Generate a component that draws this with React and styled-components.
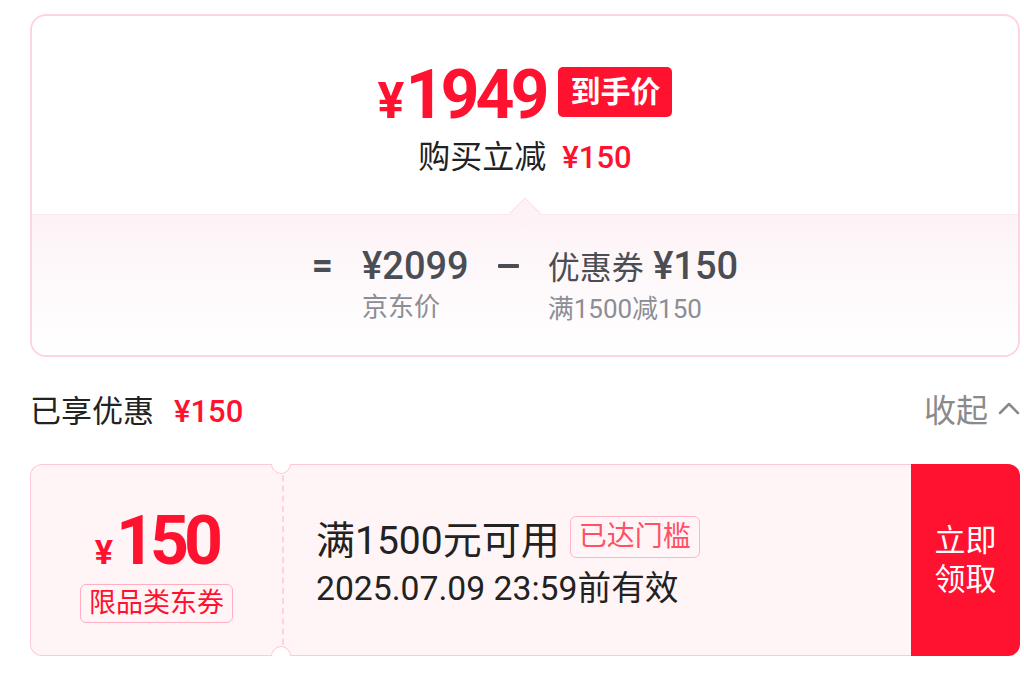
import React from 'react';
import styled, { createGlobalStyle } from 'styled-components';

const RED = '#ff1130';

const GlobalStyle = createGlobalStyle`
  body {
    margin: 0;
    background: #fff;
    font-family: Roboto, "Noto Sans CJK SC", sans-serif;
  }
`;

const Page = styled.div`
  width: 1024px;
  box-sizing: border-box;
  padding: 14px 4px 0 30px;
`;

const SummaryCard = styled.div`
  height: 343px;
  box-sizing: border-box;
  border: 2.5px solid #ffd4e0;
  border-radius: 16px;
  overflow: hidden;
  display: flex;
  flex-direction: column;
`;

const Upper = styled.div`
  height: 198px;
  box-sizing: border-box;
  padding-top: 46px;
  display: flex;
  flex-direction: column;
  align-items: center;
`;

const PriceRow = styled.div`
  height: 60px;
  display: flex;
  align-items: center;
  gap: 13px;
`;

const BigPrice = styled.span`
  margin-top: 12px;
  color: ${RED};
  font-family: Roboto, sans-serif;
  font-weight: 700;
  font-size: 68px;
  line-height: 60px;
  letter-spacing: -4px;
`;

const Yen = styled.span`
  font-size: ${(p) => p.size}px;
  letter-spacing: 0;
  margin-right: ${(p) => p.gap || 0}px;
`;

const PriceTag = styled.span`
  height: 50px;
  padding: 0 12px;
  border-radius: 5px;
  background: ${RED};
  color: #fff;
  font-weight: 700;
  font-size: 30px;
  line-height: 50px;
`;

const Subtitle = styled.div`
  margin-top: 15px;
  line-height: 40px;
  font-size: 32px;
  color: #222;
`;

const RedValue = styled.span`
  color: ${RED};
  font-weight: 500;
  font-size: ${(p) => p.size || 31}px;
  margin-left: ${(p) => p.gap || 0}px;
`;

const Lower = styled.div`
  flex: 1;
  position: relative;
  border-top: 1px solid #fde6ec;
  background: linear-gradient(#fdf3f6, #ffffff);
  padding-top: 29px;
  display: flex;
  justify-content: center;
  align-items: flex-start;
  gap: 29px;

  &::before {
    content: '';
    position: absolute;
    left: 50%;
    top: -13px;
    width: 22px;
    height: 22px;
    margin-left: -11px;
    box-sizing: border-box;
    background: #fdf3f6;
    border-top: 1px solid #fde0e8;
    border-left: 1px solid #fde0e8;
    transform: rotate(45deg);
  }
`;

const Operator = styled.span`
  color: #4b4d55;
  font-weight: 700;
  font-size: 37px;
  line-height: 44px;
`;

const MinusSign = styled.span`
  width: 21px;
  height: 4px;
  margin-top: 20px;
  border-radius: 1px;
  background: #4b4d55;
`;

const Term = styled.div`
  display: flex;
  flex-direction: column;
`;

const TermAmount = styled.div`
  color: #4b4d55;
  font-weight: 500;
  font-size: 38px;
  line-height: 44px;
  white-space: nowrap;
`;

const TermLabel = styled.span`
  font-weight: 400;
  font-size: 32px;
`;

const TermCaption = styled.div`
  margin-top: 2px;
  color: #8c8e96;
  font-size: 26px;
  line-height: 34px;
  white-space: nowrap;
`;

const Header = styled.div`
  margin-top: 21px;
  height: 60px;
  display: flex;
  align-items: center;
  justify-content: space-between;
`;

const HeaderTitle = styled.div`
  color: #222;
  font-size: 31px;
`;

const Collapse = styled.div`
  display: flex;
  align-items: center;
  gap: 10px;
  color: #8a8a8a;
  font-size: 32px;
`;

const Coupon = styled.div`
  margin-top: 26px;
  height: 192px;
  display: flex;
`;

const Ticket = styled.div`
  flex: 1;
  display: flex;
  background: #fff5f7;
  border: 1px solid #ffcad7;
  border-right: none;
  border-radius: 12px 0 0 12px;
`;

const Notch = styled.span`
  position: absolute;
  right: -9px;
  width: 20px;
  height: 20px;
  box-sizing: border-box;
  border-radius: 50%;
  background: #fff;
  border: 1px solid transparent;
  transform: rotate(-45deg);
  ${(p) =>
    p.bottom
      ? `bottom: -11px; border-top-color: #ffcad7; border-right-color: #ffcad7;`
      : `top: -11px; border-bottom-color: #ffcad7; border-left-color: #ffcad7;`}
`;

const CouponValue = styled.div`
  position: relative;
  width: 251px;
  border-right: 2px dashed #ffd3de;
  padding-top: 11px;
  box-sizing: content-box;
  display: flex;
  flex-direction: column;
  align-items: center;
  justify-content: center;
`;

const CouponAmount = styled.div`
  color: ${RED};
  font-family: Roboto, sans-serif;
  font-weight: 700;
  font-size: 68px;
  line-height: 64px;
  letter-spacing: -5px;
`;

const OutlineTag = styled.span`
  height: ${(p) => p.h}px;
  box-sizing: border-box;
  padding: 0 ${(p) => p.pad}px;
  border: 1px solid ${(p) => p.border};
  border-radius: 6px;
  color: ${(p) => p.color};
  font-size: ${(p) => p.size}px;
  line-height: ${(p) => p.h - 2}px;
  white-space: nowrap;
`;

const CouponInfo = styled.div`
  flex: 1;
  padding: 4px 0 0 32px;
  display: flex;
  flex-direction: column;
  justify-content: center;
  color: #222;
`;

const Condition = styled.div`
  height: 46px;
  display: flex;
  align-items: center;
  gap: 10px;
  font-size: 39px;
`;

const Expiry = styled.div`
  margin-top: 8px;
  font-size: 33.7px;
  line-height: 42px;
`;

const ClaimButton = styled.div`
  width: 109px;
  background: ${RED};
  border-radius: 0 12px 12px 0;
  color: #fff;
  font-size: 31px;
  line-height: 39px;
  display: flex;
  align-items: center;
  justify-content: center;
  text-align: center;
`;

const ChevronUp = () => (
  <svg width="22" height="14" viewBox="0 0 22 14">
    <polyline
      points="2,12 11,3 20,12"
      fill="none"
      stroke="#8a8a8a"
      strokeWidth="2.5"
      strokeLinecap="round"
      strokeLinejoin="round"
    />
  </svg>
);

export default () => (
  <>
    <GlobalStyle />
    <Page>
      <SummaryCard>
        <Upper>
          <PriceRow>
            <BigPrice>
              <Yen size={50} gap={1}>¥</Yen>1949
            </BigPrice>
            <PriceTag>到手价</PriceTag>
          </PriceRow>
          <Subtitle>
            购买立减<RedValue gap={16}>¥150</RedValue>
          </Subtitle>
        </Upper>
        <Lower>
          <Operator>=</Operator>
          <Term>
            <TermAmount>¥2099</TermAmount>
            <TermCaption>京东价</TermCaption>
          </Term>
          <MinusSign />
          <Term>
            <TermAmount>
              <TermLabel>优惠券</TermLabel> ¥150
            </TermAmount>
            <TermCaption>满1500减150</TermCaption>
          </Term>
        </Lower>
      </SummaryCard>

      <Header>
        <HeaderTitle>
          已享优惠<RedValue gap={20}>¥150</RedValue>
        </HeaderTitle>
        <Collapse>
          收起
          <ChevronUp />
        </Collapse>
      </Header>

      <Coupon>
        <Ticket>
          <CouponValue>
            <Notch />
            <Notch bottom />
            <CouponAmount>
              <Yen size={34} gap={3}>¥</Yen>150
            </CouponAmount>
            <OutlineTag h={39} pad={8} border="#ffafc2" color={RED} size={27}>
              限品类东券
            </OutlineTag>
          </CouponValue>
          <CouponInfo>
            <Condition>
              满1500元可用
              <OutlineTag h={42} pad={8} border="#ffb5c5" color="#ff5065" size={28}>
                已达门槛
              </OutlineTag>
            </Condition>
            <Expiry>2025.07.09 23:59前有效</Expiry>
          </CouponInfo>
        </Ticket>
        <ClaimButton>
          立即
          <br />
          领取
        </ClaimButton>
      </Coupon>
    </Page>
  </>
);
